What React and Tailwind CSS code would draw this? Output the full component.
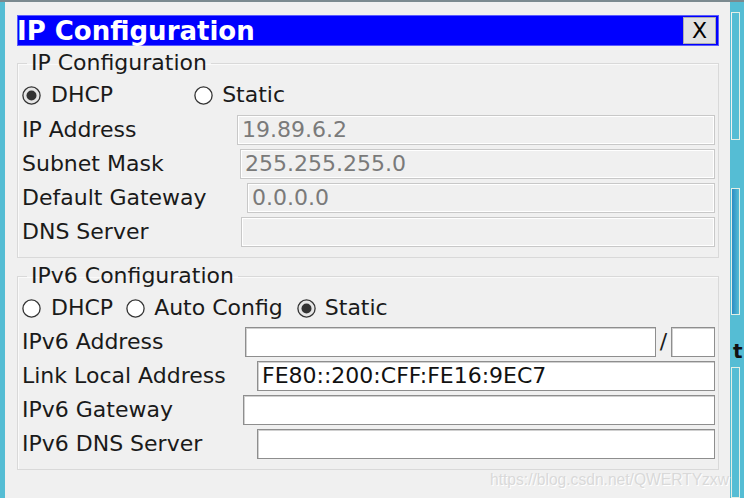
import React from "react";

function Radio({ checked }) {
  return (
    <svg width="19" height="19" viewBox="0 0 19 19" className="shrink-0">
      <circle cx="9.5" cy="9.5" r="8.6" fill={checked ? "#e6e6e6" : "#ffffff"} stroke="#333333" strokeWidth="1.3" />
      {checked && <circle cx="9.5" cy="9.5" r="5" fill="#333333" />}
    </svg>
  );
}

function Field({ disabled, value, className = "" }) {
  return (
    <div
      className={
        "h-[30px] flex items-center pl-[4px] text-[22px] leading-none whitespace-nowrap " +
        (disabled
          ? "bg-[#f0f0f0] border border-[#c8c8c8] shadow-[inset_1px_1px_0_#ffffff,inset_-1px_-1px_0_#ffffff] text-[#7a7a7a] "
          : "bg-white border border-[#8e8e8e] shadow-[inset_1px_1px_0_#d0d0d0] text-[#111111] ") +
        className
      }
    >
      {value}
    </div>
  );
}

function Row({ label, labelW, children }) {
  return (
    <div className="flex items-center h-[30px]">
      <div className={"shrink-0 text-[22px] leading-none text-[#1a1a1a] whitespace-nowrap " + labelW}>{label}</div>
      {children}
    </div>
  );
}

export default function App() {
  return (
    <div className="w-[744px] h-[498px] overflow-hidden bg-[#55bdd4] flex flex-col font-['DejaVu_Sans',sans-serif] relative">
      <div className="h-[2px] bg-[#7b8a8f] shrink-0" />
      <div className="flex flex-1 min-h-0">
        <div className="w-[5px] shrink-0 bg-[#55bdd4]" />
        <div className="w-[725px] shrink-0 bg-[#f0f0f0] pl-[12px] pr-[11px] pt-[13px] flex flex-col">
          {/* Title bar */}
          <div className="h-[31px] bg-[#0000ff] border border-[#5c5cff] flex items-center justify-between">
            <div className="text-white font-bold text-[26px] leading-none -ml-[1px]">IP Configuration</div>
            <div className="w-[33px] h-[27px] mr-[2px] bg-[#e1e1e1] border border-[#adadad] flex items-center justify-center text-[22px] leading-none text-black">
              X
            </div>
          </div>

          {/* IPv4 */}
          <fieldset className="mt-[4px] border border-[#d9d9d9] shadow-[inset_1px_1px_0_#fafafa] pl-[4px] pr-[3px] pb-[10px]">
            <legend className="ml-[5px] px-[4px] text-[22px] leading-[26px] text-[#1a1a1a]">IP Configuration</legend>
            <div className="mt-[4px] h-[30px] flex items-center">
              <Radio checked />
              <span className="ml-[10px] text-[22px] leading-none text-[#1a1a1a]">DHCP</span>
              <div className="ml-[81px]">
                <Radio />
              </div>
              <span className="ml-[9px] text-[22px] leading-none text-[#1a1a1a]">Static</span>
            </div>
            <div className="mt-[5px] flex flex-col gap-[4px]">
              <Row label="IP Address" labelW="w-[215px]">
                <Field disabled value="19.89.6.2" className="flex-1" />
              </Row>
              <Row label="Subnet Mask" labelW="w-[218px]">
                <Field disabled value="255.255.255.0" className="flex-1" />
              </Row>
              <Row label="Default Gateway" labelW="w-[225px]">
                <Field disabled value="0.0.0.0" className="flex-1" />
              </Row>
              <Row label="DNS Server" labelW="w-[219px]">
                <Field disabled value="" className="flex-1" />
              </Row>
            </div>
          </fieldset>

          {/* IPv6 */}
          <fieldset className="mt-[5px] border border-[#d9d9d9] shadow-[inset_1px_1px_0_#fafafa] pl-[4px] pr-[3px] pb-[10px]">
            <legend className="ml-[5px] px-[4px] text-[22px] leading-[26px] text-[#1a1a1a]">IPv6 Configuration</legend>
            <div className="mt-[4px] h-[30px] flex items-center text-[22px] leading-none text-[#1a1a1a]">
              <Radio />
              <span className="ml-[10px]">DHCP</span>
              <div className="ml-[13px]">
                <Radio />
              </div>
              <span className="ml-[9px]">Auto Config</span>
              <div className="ml-[14px]">
                <Radio checked />
              </div>
              <span className="ml-[9px]">Static</span>
            </div>
            <div className="mt-[4px] flex flex-col gap-[4px]">
              <Row label="IPv6 Address" labelW="w-[223px]">
                <Field value="" className="w-[411px]" />
                <span className="w-[15px] text-center text-[22px] leading-none text-[#1a1a1a]">/</span>
                <Field value="" className="flex-1" />
              </Row>
              <Row label="Link Local Address" labelW="w-[235px]">
                <Field value="FE80::200:CFF:FE16:9EC7" className="flex-1" />
              </Row>
              <Row label="IPv6 Gateway" labelW="w-[221px]">
                <Field value="" className="flex-1" />
              </Row>
              <Row label="IPv6 DNS Server" labelW="w-[235px]">
                <Field value="" className="flex-1" />
              </Row>
            </div>
          </fieldset>
        </div>

        {/* background app strip */}
        <div className="flex-1 flex flex-col pl-[1px] pt-[10px]">
          <div className="h-[128px] w-[9px] border border-[#e3efe6] border-l-[#f2f2f2]" />
          <div className="h-[48px]" />
          <div className="h-[127px] w-[9px] border border-[#e3efe6] bg-gradient-to-r from-[#2c8cc4] to-[#55bdd4]" />
          <div className="h-[52px] pl-[2px] pt-[26px] text-[20px] font-bold leading-none text-[#111] overflow-hidden">t</div>
          <div className="flex-1 w-[9px] border border-[#e3efe6]" />
        </div>
      </div>

      {/* watermark */}
      <div className="absolute left-[490px] top-[472px] text-[15.6px] leading-none whitespace-nowrap font-['Liberation_Sans',sans-serif] text-[#d9d9d9] [text-shadow:1px_1px_0_#ffffff]">
        https://blog.csdn.net/QWERTYzxw
      </div>
    </div>
  );
}
